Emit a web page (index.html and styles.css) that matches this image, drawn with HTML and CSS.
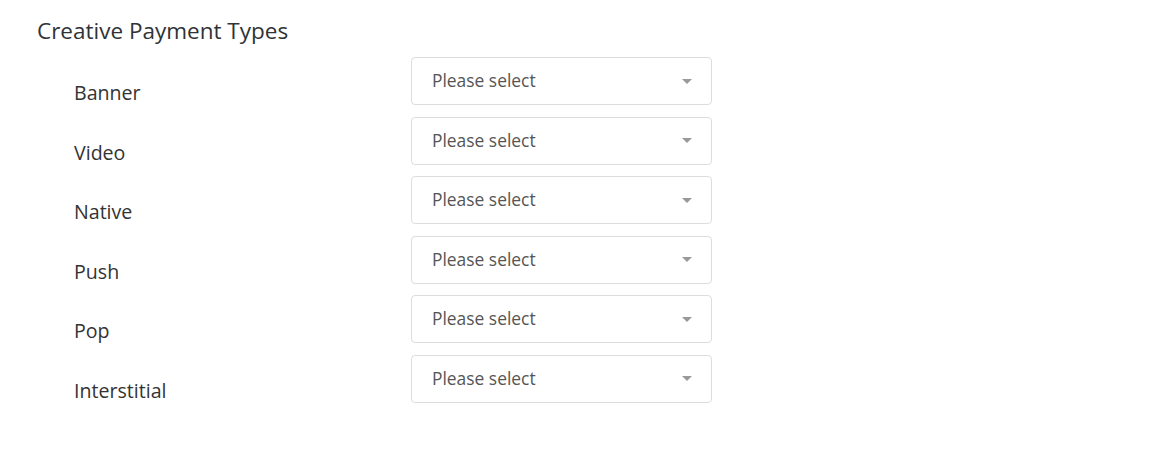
FILE: index.html
```html
<!DOCTYPE html>
<html>
<head>
<meta charset="utf-8">
<link rel="stylesheet" href="styles.css">
</head>
<body>
<div class="page">
  <h2 class="title">Creative Payment Types</h2>
  <div class="rows">
    <div class="row"><div class="label">Banner</div><div class="select"><span>Please select</span><i class="caret"></i></div></div>
    <div class="row"><div class="label">Video</div><div class="select"><span>Please select</span><i class="caret"></i></div></div>
    <div class="row"><div class="label">Native</div><div class="select"><span>Please select</span><i class="caret"></i></div></div>
    <div class="row"><div class="label">Push</div><div class="select"><span>Please select</span><i class="caret"></i></div></div>
    <div class="row"><div class="label">Pop</div><div class="select"><span>Please select</span><i class="caret"></i></div></div>
    <div class="row"><div class="label">Interstitial</div><div class="select"><span>Please select</span><i class="caret"></i></div></div>
  </div>
</div>
</body>
</html>
```

FILE: styles.css
```css
html, body { margin: 0; padding: 0; background: #fff; }
body { font-family: "Open Sans", "Liberation Sans", sans-serif; color: #333; }
.page { padding: 15px 0 0 37px; }
.title { margin: 0; font-size: 22.5px; font-weight: 400; line-height: 32px; color: #2f3337; }
.rows { display: flex; flex-direction: column; gap: 11.6px; margin-top: 10px; padding-left: 37px; }
.row { display: flex; align-items: flex-start; height: 48px; }
.label { width: 337px; font-size: 19.6px; line-height: 24px; padding-top: 24px; color: #333; }
.select { box-sizing: border-box; width: 301px; height: 48px; border: 1px solid #ddd; border-radius: 4px; display: flex; align-items: center; justify-content: space-between; padding: 0 19px 0 20px; }
.select span { font-size: 17.4px; color: #555; margin-top: -2px; }
.caret { width: 0; height: 0; border-left: 5px solid transparent; border-right: 5px solid transparent; border-top: 5px solid #999; }
```
